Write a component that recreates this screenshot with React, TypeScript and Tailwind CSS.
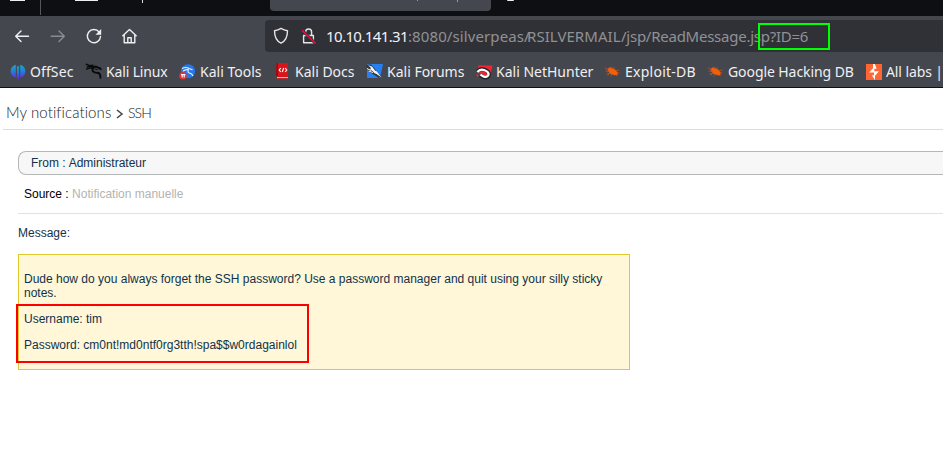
import type { ReactNode } from "react";

const ui = "font-['Noto_Sans',sans-serif]";

function OffSec() {
  return (
    <svg width="16" height="16" viewBox="0 0 16 16">
      <defs>
        <linearGradient id="os" gradientUnits="userSpaceOnUse" x1="0" y1="0" x2="0" y2="16">
          <stop offset="0" stopColor="#12b4b8" />
          <stop offset=".5" stopColor="#2c76d8" />
          <stop offset="1" stopColor="#6a1ce0" />
        </linearGradient>
      </defs>
      <path fill="url(#os)" d="M5.8.8v12.8C2.4 12.6.6 10.2.6 7.2S2.4 1.8 5.8.8zM6.9 2.6Q8 1.4 9.1 2.6v11.6L8 16l-1.1-1.8zM10.2.8c3.4 1 5.2 3.4 5.2 6.4s-1.8 5.4-5.2 6.4z" />
    </svg>
  );
}
function Dragon() {
  return (
    <svg width="17" height="17" viewBox="0 0 17 17" fill="none" stroke="#08090b" strokeLinecap="round" strokeLinejoin="round">
      <path strokeWidth="1.3" d="M1.2 1.2l3.3 1.4 3.5-.4M2 3.8l3.5-.6L9 4M1.6 6.2l3-1.4 3.4.3" />
      <path strokeWidth="1.9" d="M7 4.3l4-.8 4.5 2M8.5 4.8Q6.2 7.5 8.8 9q2 1.1 4 .8 2.6.4 2.6 5" />
      <path strokeWidth="1" d="M11.5 4.2q1 1.6 4.7 2.4M10 6l2 .6M12.5 10l2.5 1.5" />
    </svg>
  );
}
function Tools() {
  return (
    <svg width="16" height="16" viewBox="0 0 16 16">
      <circle cx="9" cy="7.2" r="7" fill="#2478ef" />
      <path d="M3 4.5q4-2 7 0l3.5 1.3M4 7q4-2 6-1M9.5 5.8q-1.5 2.5 1 3.2 2.5.5 3.5 3" fill="none" stroke="#e8f1ff" strokeWidth="1.1" />
      <circle cx="4" cy="11.8" r="3.8" fill="#e33235" />
      <path d="M2 10.6h4.4M3.2 10.5v3M5.2 10.5v3" stroke="#fff" fill="none" strokeWidth="1.1" />
    </svg>
  );
}
function Docs() {
  return (
    <svg width="14" height="17" viewBox="0 0 14 17">
      <path fill="#d9151a" d="M1.5 0H13v14H2v-1H1z" />
      <path fill="#920d12" d="M1.5 0H3v13H1z" />
      <path fill="#f0dfdf" d="M2 14.2h11v1H2z" />
      <path fill="#d9151a" d="M1.5 15.3H13v1H1.5z" />
      <path fill="none" stroke="#fff" strokeWidth="1.1" d="M5.8 5L4.2 7l1.6 2M10.2 5l1.6 2-1.6 2M8.7 5L7.3 9" />
    </svg>
  );
}
function Forums() {
  return (
    <svg width="17" height="15" viewBox="0 0 17 15">
      <path fill="#2680f2" d="M1 0h16l-3 14H1z" />
      <path fill="#33363b" d="M0 1l5-.5L15 12l-2 2L2 7z" />
      <path fill="#f2f4f5" d="M2 1.2l4 1.3 3 4 2 1 4.5 6-5-3.5-2-.8L6.5 7 4 5.5 5 4z" />
      <path stroke="#f2f4f5" strokeWidth="1" d="M1 4.5l4 2M2.5 7L7 8.5" />
    </svg>
  );
}
function Hunter() {
  return (
    <svg width="17" height="16" viewBox="0 0 17 16">
      <path fill="#f42533" d="M2.5 1.5h14L13.5 14 9 13 1 8z" />
      <path d="M1.2 7.5Q4 4.2 8 5.4q5.4 2 5 5.4-.8 3.2-4.2 2.8-2.5-.6-4.6-2.6" stroke="#22252b" strokeWidth="3.9" fill="none" />
      <path d="M1.4 8Q4 4.8 8 6q5 1.8 4.5 4.6-.6 2.5-3.8 2.2-2.2-.5-4.2-2.3" stroke="#fff" strokeWidth="2.3" fill="none" />
      <path fill="#f42533" d="M0 9.5l3 2-1.5 1.8z" />
    </svg>
  );
}
function Bug() {
  return (
    <svg width="15" height="14" viewBox="0 0 15 14">
      <path fill="#f3600d" d="M2.5 4.4L4 2.6l3 .5 3 1.5 2.4 2.6.2 2.8-3 .2L5 8.6 3 6z" />
      <path fill="none" stroke="#c95418" strokeWidth=".8" d="M0 3l4 2M.5 6L5 6.5M1.5 9l4-1M6 1.5l1 3M9 2v3M11 5.5l3.3-.3M12 7.6l2.5.6M7 9l-1.5 2.4M11 9.6l1.2 1.6M5 8l-2.5 2.5" />
    </svg>
  );
}
function Burp() {
  return (
    <svg width="16" height="16" viewBox="0 0 16 16">
      <path fill="#ff6633" d="M0 0h16v16H0z" />
      <path fill="#fff" d="M8.8 0H7v4.2L3 8.5h5v2.8H5.8L9 16V11.8l4-4.5H8.3V4.8h2.3z" />
    </svg>
  );
}

function Bookmark({ icon, label, cell, fit }: { icon: ReactNode; label: string; cell: string; fit: string }) {
  return (
    <div className={`flex h-full shrink-0 items-center ${cell}`}>
      <span className="flex w-5 shrink-0 items-center">{icon}</span>
      <span className={`whitespace-nowrap ${fit}`}>{label}</span>
    </div>
  );
}

export default function App() {
  return (
    <div className="h-[452px] w-[943px] overflow-hidden bg-white">
      <div className="flex h-4 bg-[#0e0f13]">
        <div className="flex h-[15px] w-[41px] items-start border-r border-[#55575c] pl-[10px]">
          <i className="h-px w-[15px] bg-[#eee]" />
        </div>
        <div className="flex w-[229px] items-start pl-[34px]">
          <i className="h-px w-[23px] bg-[#eee]" />
          <i className="ml-11 h-[3px] w-px bg-[#ddd]" />
        </div>
        <div className="flex h-[11px] w-[221px] items-start rounded-b-[4px] bg-[#45474e]">
          <i className="ml-[147px] h-px w-px bg-[#999]" />
          <i className="ml-[39px] h-[2px] w-px bg-[#999]" />
        </div>
        <i className="ml-4 h-px w-[7px] rounded-b-full bg-[#eee]" />
      </div>

      <div className="flex h-10 items-center bg-[#45474e]">
        <div className="flex h-full w-[265px] shrink-0 items-center pl-[14px]">
          <svg width="130" height="18" viewBox="0 0 130 18" fill="none" stroke="#f0f0f2" strokeWidth="1.4" strokeLinecap="round" strokeLinejoin="round">
            <path d="M14.5 9.3H1.7M7 4L1.7 9.3 7 14.6" />
            <path stroke="#898b90" d="M37.2 9.3H50M45 4l5.3 5.3L45 14.6" />
            <path d="M85.2 5.2A6.6 6.6 0 1 0 86.5 9.5" />
            <path fill="#f0f0f2" stroke="none" d="M87.2 2v5.7h-5.7z" />
            <path d="M108.8 8.8l6.7-6.3 6.7 6.3M110.2 7.8v8h10.6v-8M113.8 15.5v-4.7h3.4v4.7" />
          </svg>
        </div>
        <div className="relative flex h-8 flex-1 items-center rounded-l-[4px] bg-[#303136]">
          <svg className="ml-2 shrink-0" width="46" height="20" viewBox="0 0 46 20" fill="none" stroke="#e5e5e7" strokeWidth="1.4" strokeLinejoin="round">
            <path d="M8 2.4Q11 4.3 14.5 4.7C14.5 11 12.5 15 8 17.2 3.5 15 1.5 11 1.5 4.7Q5 4.3 8 2.4z" />
            <path d="M30.6 9.5h9.8v7.3h-9.8zM32.6 9V6a3 3 0 0 1 6 0v3" />
            <path stroke="#303136" strokeWidth="3" d="M28.5 3.5l14 14" />
            <path stroke="#ef0f45" d="M29 4.3l13.5 13.2" />
          </svg>
          <div className={`${ui} ml-[7px] flex text-[15px] whitespace-nowrap text-[#909195]`}>
            <span className="w-[82px] tracking-[-0.6px] text-[#f2f2f4]">10.10.141.31</span>
            <span className="w-[119px] tracking-[0.1px]">:8080/silverpeas/</span>
            <span className="w-[94px] tracking-[0.05px]">RSILVERMAIL</span>
            <span className="tracking-[-0.25px]">/jsp/ReadMessage.jsp?ID=6</span>
          </div>
          <div className="absolute top-[3px] left-[493px] h-[27px] w-[72px] border-2 border-[#00ff00]" />
        </div>
      </div>

      <div className={`${ui} flex h-8 border-b border-[#101116] bg-[#45474e] pl-[10px] text-[14px] text-[#f0f0f2]`}>
        <Bookmark icon={<OffSec />} label="OffSec" cell="w-[75px]" fit="tracking-[0.1px]" />
        <Bookmark icon={<Dragon />} label="Kali Linux" cell="w-[94px]" fit="pl-px tracking-[-0.15px]" />
        <Bookmark icon={<Tools />} label="Kali Tools" cell="w-[96px]" fit="pl-px" />
        <Bookmark icon={<Docs />} label="Kali Docs" cell="w-[91px]" fit="" />
        <Bookmark icon={<Forums />} label="Kali Forums" cell="w-[110px]" fit="pl-px" />
        <Bookmark icon={<Hunter />} label="Kali NetHunter" cell="w-[129px]" fit="" />
        <Bookmark icon={<Bug />} label="Exploit-DB" cell="w-[103px]" fit="tracking-[0.25px]" />
        <Bookmark icon={<Bug />} label="Google Hacking DB" cell="w-[158px]" fit="tracking-[-0.08px]" />
        <Bookmark icon={<Burp />} label="All labs |" cell="w-[80px]" fit="tracking-[-0.1px]" />
      </div>

      <div className="ml-[3px] flex h-[42px] items-center border-b border-[#dddddd] pt-2 pl-[3px] font-['Lato',sans-serif] text-[15px] font-light text-[#222]">
        <span className="w-[106px] tracking-[0.1px] whitespace-nowrap">My notifications</span>
        <svg className="mt-0.5 mr-1 ml-1" width="8" height="12" viewBox="0 0 8 12" fill="none" stroke="#444" strokeWidth="1.5"><path d="M1 2l5 4-5 4" /></svg>
        <span className="text-[14px] tracking-[-0.9px]">SSH</span>
      </div>

      <div className="pt-[21px] pl-[18px] font-['Liberation_Sans',Arial,sans-serif] text-[12px] leading-[14px] text-[#10324b]">
        <div className="flex h-6 items-center rounded-l-[8px] border border-r-0 border-[#b5b8b8] bg-[#f7f7f7] pl-3">
          <span>From :</span><span className="ml-[3px]">Administrateur</span>
        </div>
        <div className="flex h-[39px] items-center border-b border-[#e2e2e2] pl-[6px] text-[#b3b3b3]">
          <span className="text-black">Source :</span>&nbsp;Notification manuelle
        </div>
        <div className="flex h-10 items-center pb-[2px]">Message:</div>
        <div className="relative h-[116px] w-[612px] border border-[#e0c92c] bg-[#fff7d7] px-[5px] pt-[17px]">
          <p>Dude how do you always forget the SSH password? Use a password manager and quit using your silly sticky notes.</p>
          <p className="mt-3">Username: tim</p>
          <p className="mt-3">Password: cm0nt!md0ntf0rg3tth!spa$$w0rdagainlol</p>
          <div className="absolute top-[49px] left-[-3px] h-[59px] w-[293px] border-2 border-[#ff0000]" />
        </div>
      </div>
    </div>
  );
}
